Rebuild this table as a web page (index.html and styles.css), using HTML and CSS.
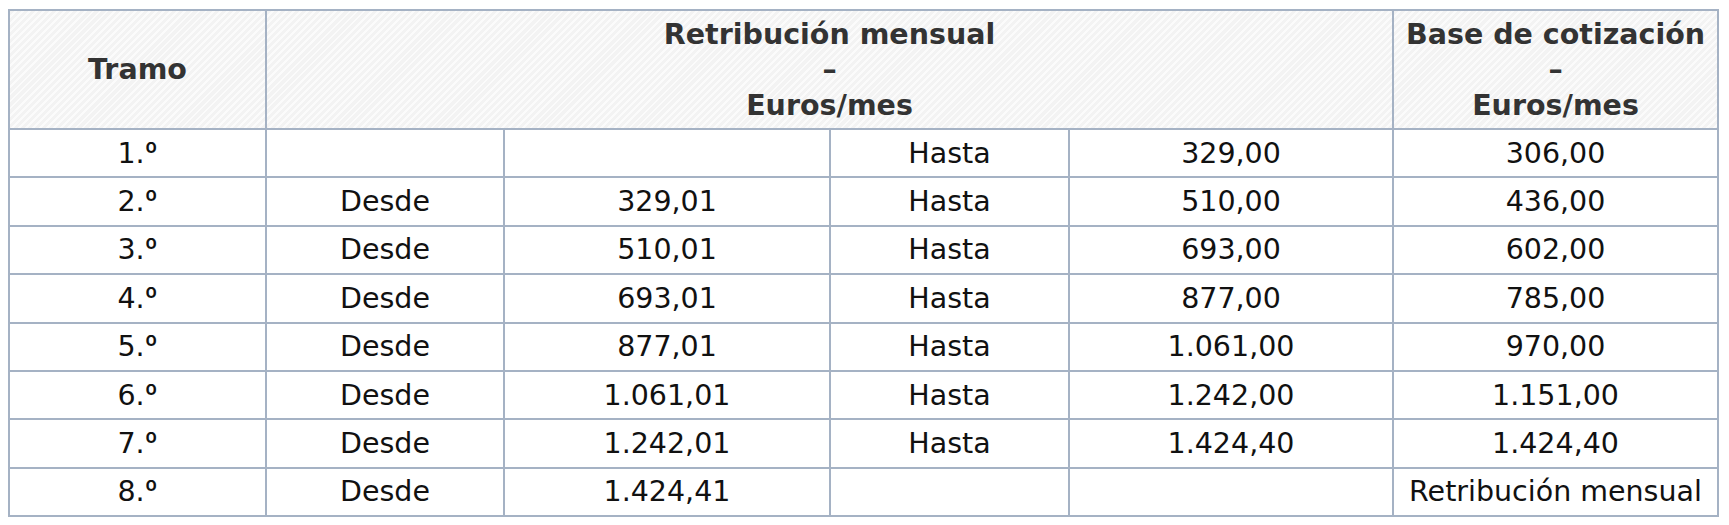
FILE: index.html
```html
<!DOCTYPE html>
<html lang="es">
<head>
<meta charset="utf-8">
<title>Tramos de cotización</title>
<link rel="stylesheet" href="styles.css">
</head>
<body>
<table class="tabla">
  <colgroup>
    <col class="c1"><col class="c2"><col class="c3"><col class="c4"><col class="c5"><col class="c6">
  </colgroup>
  <thead>
    <tr>
      <th>Tramo</th>
      <th colspan="4">Retribución mensual<br>–<br>Euros/mes</th>
      <th>Base de cotización<br>–<br>Euros/mes</th>
    </tr>
  </thead>
  <tbody>
    <tr><td>1.<span class="ord">º</span></td><td></td><td></td><td>Hasta</td><td>329,00</td><td>306,00</td></tr>
    <tr><td>2.<span class="ord">º</span></td><td>Desde</td><td>329,01</td><td>Hasta</td><td>510,00</td><td>436,00</td></tr>
    <tr><td>3.<span class="ord">º</span></td><td>Desde</td><td>510,01</td><td>Hasta</td><td>693,00</td><td>602,00</td></tr>
    <tr><td>4.<span class="ord">º</span></td><td>Desde</td><td>693,01</td><td>Hasta</td><td>877,00</td><td>785,00</td></tr>
    <tr><td>5.<span class="ord">º</span></td><td>Desde</td><td>877,01</td><td>Hasta</td><td>1.061,00</td><td>970,00</td></tr>
    <tr><td>6.<span class="ord">º</span></td><td>Desde</td><td>1.061,01</td><td>Hasta</td><td>1.242,00</td><td>1.151,00</td></tr>
    <tr><td>7.<span class="ord">º</span></td><td>Desde</td><td>1.242,01</td><td>Hasta</td><td>1.424,40</td><td>1.424,40</td></tr>
    <tr><td>8.<span class="ord">º</span></td><td>Desde</td><td>1.424,41</td><td></td><td></td><td>Retribución mensual</td></tr>
  </tbody>
</table>
</body>
</html>
```

FILE: styles.css
```css
html, body {
  background: #ffffff;
}
body {
  margin: 9px 8px 8px 8px;
  font-family: "DejaVu Sans", Verdana, sans-serif;
  font-size: 28.5px;
  color: #111111;
}
.tabla {
  width: 1711px;
  border-collapse: collapse;
  table-layout: fixed;
}
.c1 { width: 257px; }
.c2 { width: 238px; }
.c3 { width: 326px; }
.c4 { width: 239px; }
.c5 { width: 324px; }
.c6 { width: 325px; }
.tabla th,
.tabla td {
  border: 2px solid #a5b2c4;
  text-align: center;
  vertical-align: middle;
  padding: 5.7px 4px;
  white-space: nowrap;
  overflow: hidden;
}
.tabla th {
  font-weight: bold;
  color: #333333;
  line-height: 35.5px;
  padding-top: 5.5px;
  padding-bottom: 5px;
  background-color: #f3f3f3;
  background-image: repeating-linear-gradient(135deg, #f3f3f3 0px, #f3f3f3 3px, #fbfbfb 3px, #fbfbfb 5px);
}
.tabla td {
  line-height: 35px;
  padding-top: 5.7px;
  padding-bottom: 5.7px;
  color: #111111;
}
.ord {
  font-family: Inter, "Open Sans", sans-serif;
  line-height: 0;
}
```
